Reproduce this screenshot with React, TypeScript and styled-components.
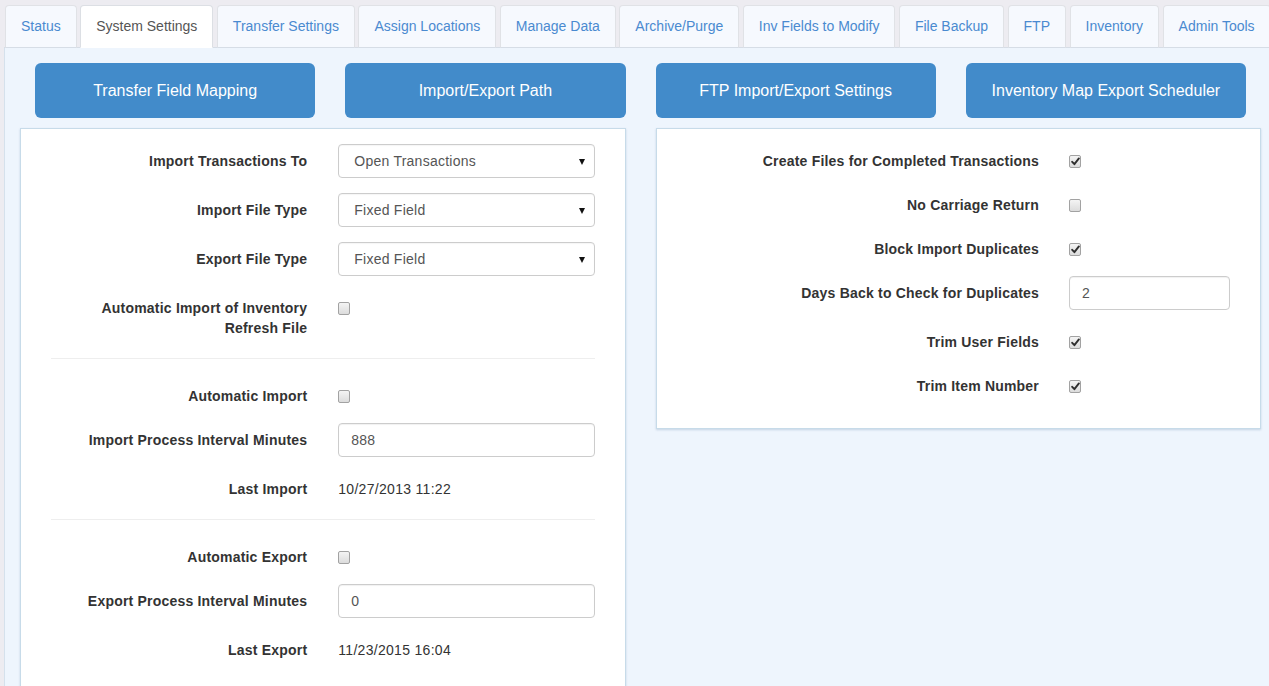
import React from 'react';
import styled, { createGlobalStyle } from 'styled-components';

const GlobalStyle = createGlobalStyle`
  html, body {
    margin: 0;
    padding: 0;
    background: #edecf1;
    overflow: hidden;
  }
  body {
    font-family: "Liberation Sans", Arial, Helvetica, sans-serif;
    font-size: 14px;
    line-height: 20px;
    color: #333;
  }
  * {
    box-sizing: border-box;
  }
`;

const tabs = [
  'Status',
  'System Settings',
  'Transfer Settings',
  'Assign Locations',
  'Manage Data',
  'Archive/Purge',
  'Inv Fields to Modify',
  'File Backup',
  'FTP',
  'Inventory',
  'Admin Tools',
];

const actions = [
  'Transfer Field Mapping',
  'Import/Export Path',
  'FTP Import/Export Settings',
  'Inventory Map Export Scheduler',
];

function Checkbox(props: { checked?: boolean }): JSX.Element {
  return (
    <CheckWrap>
      <CheckBox>
        {props.checked && (
          <svg width="9" height="9" viewBox="0 0 9 9">
            <path
              d="M1.2 4.8 L3.4 7.2 L7.9 1.4"
              fill="none"
              stroke="#2f2f2f"
              strokeWidth="1.9"
              strokeLinecap="round"
              strokeLinejoin="round"
            />
          </svg>
        )}
      </CheckBox>
    </CheckWrap>
  );
}

function Select(props: { value: string }): JSX.Element {
  return (
    <SelectWrap>
      <SelectField defaultValue={props.value}>
        <option>{props.value}</option>
      </SelectField>
      <Caret />
    </SelectWrap>
  );
}

export default function App(): JSX.Element {
  return (
    <Page>
      <GlobalStyle />
      <TabBar>
        {tabs.map((t) => (
          <Tab key={t} active={t === 'System Settings'}>
            {t}
          </Tab>
        ))}
      </TabBar>
      <Pane>
        <ButtonRow>
          {actions.map((a) => (
            <ActionButton key={a}>{a}</ActionButton>
          ))}
        </ButtonRow>
        <PanelGrid>
          <Panel>
            <FormRow>
              <Label>Import Transactions To</Label>
              <Select value="Open Transactions" />
            </FormRow>
            <FormRow>
              <Label>Import File Type</Label>
              <Select value="Fixed Field" />
            </FormRow>
            <FormRow>
              <Label>Export File Type</Label>
              <Select value="Fixed Field" />
            </FormRow>
            <FormRow>
              <Label>Automatic Import of Inventory Refresh File</Label>
              <Checkbox />
            </FormRow>
            <Divider />
            <FormRow>
              <Label>Automatic Import</Label>
              <Checkbox />
            </FormRow>
            <FormRow>
              <Label>Import Process Interval Minutes</Label>
              <TextInput defaultValue="888" />
            </FormRow>
            <FormRow>
              <Label>Last Import</Label>
              <StaticText>10/27/2013 11:22</StaticText>
            </FormRow>
            <Divider />
            <FormRow>
              <Label>Automatic Export</Label>
              <Checkbox />
            </FormRow>
            <FormRow>
              <Label>Export Process Interval Minutes</Label>
              <TextInput defaultValue="0" />
            </FormRow>
            <FormRow>
              <Label>Last Export</Label>
              <StaticText>11/23/2015 16:04</StaticText>
            </FormRow>
          </Panel>
          <Panel>
            <FormRow wide>
              <Label>Create Files for Completed Transactions</Label>
              <Checkbox checked />
            </FormRow>
            <FormRow wide>
              <Label>No Carriage Return</Label>
              <Checkbox />
            </FormRow>
            <FormRow wide>
              <Label>Block Import Duplicates</Label>
              <Checkbox checked />
            </FormRow>
            <FormRow wide>
              <Label>Days Back to Check for Duplicates</Label>
              <TextInput defaultValue="2" />
            </FormRow>
            <FormRow wide>
              <Label>Trim User Fields</Label>
              <Checkbox checked />
            </FormRow>
            <FormRow wide>
              <Label>Trim Item Number</Label>
              <Checkbox checked />
            </FormRow>
          </Panel>
        </PanelGrid>
      </Pane>
    </Page>
  );
}

const Page = styled.div`
  width: 1281px;
  padding: 5px 0 0 4px;
`;

const TabBar = styled.ul`
  display: flex;
  flex-wrap: nowrap;
  list-style: none;
  margin: 0;
  padding: 0 0 0 1px;
  border-bottom: 1px solid #d6dde6;
`;

const Tab = styled.li<{ active?: boolean }>`
  flex: none;
  margin: 0 3.5px -1px 0;
  padding: 10px 15px 11px;
  line-height: 20px;
  white-space: nowrap;
  border: 1px solid ${(p) => (p.active ? '#dcdfe4' : '#e0e2e6')};
  border-bottom-color: ${(p) => (p.active ? 'transparent' : '#d6dde6')};
  border-radius: 4px 4px 0 0;
  background: ${(p) => (p.active ? '#ffffff' : '#f6f9fe')};
  color: ${(p) => (p.active ? '#555555' : '#4a8ad0')};
`;

const Pane = styled.div`
  width: 1273px;
  background: #eef5fd;
  border: 1px solid #d5e1ec;
  border-top: none;
  padding: 15px;
  min-height: 700px;
`;

const ButtonRow = styled.div`
  display: grid;
  grid-template-columns: repeat(4, 1fr);
  column-gap: 30px;
  padding: 0 15px;
  margin-bottom: 10px;
`;

const ActionButton = styled.button`
  height: 55px;
  border: none;
  border-radius: 6px;
  background: #428bca;
  color: #ffffff;
  font-family: "Liberation Sans", Arial, sans-serif;
  font-size: 16px;
  padding: 0 10px;
`;

const PanelGrid = styled.div`
  display: grid;
  grid-template-columns: 1fr 1fr;
  column-gap: 30px;
  align-items: start;
`;

const Panel = styled.div`
  background: #ffffff;
  border: 1px solid #c7dbe9;
  box-shadow: 0 1px 2px rgba(120, 150, 180, 0.35);
  padding: 15px 30px;
`;

const FormRow = styled.div<{ wide?: boolean }>`
  display: grid;
  grid-template-columns: ${(p) => (p.wide ? '1fr 161px' : '1fr 1fr')};
  column-gap: ${(p) => (p.wide ? '30px' : '31px')};
  margin-bottom: 15px;
`;

const Label = styled.label`
  text-align: right;
  font-weight: bold;
  padding-top: 7px;
  line-height: 20px;
  letter-spacing: 0.2px;
  color: #333;
`;

const StaticText = styled.div`
  padding-top: 7px;
  line-height: 20px;
  min-height: 27px;
  letter-spacing: 0.3px;
  color: #333;
`;

const CheckWrap = styled.div`
  padding-top: 11px;
  min-height: 29px;
`;

const CheckBox = styled.span`
  display: flex;
  align-items: center;
  justify-content: center;
  width: 12px;
  height: 13px;
  border: 1px solid #a2a2a2;
  border-radius: 2px;
  background: linear-gradient(#f4f4f4, #dcdcdc);
`;

const SelectWrap = styled.div`
  position: relative;
  height: 34px;
`;

const SelectField = styled.select`
  appearance: none;
  width: 100%;
  height: 34px;
  border: 1px solid #cccccc;
  border-radius: 4px;
  background: #ffffff;
  padding: 0 15px;
  font-family: "Liberation Sans", Arial, sans-serif;
  font-size: 14px;
  letter-spacing: 0.25px;
  color: #555555;
  box-shadow: inset 0 1px 1px rgba(0, 0, 0, 0.04);
`;

const Caret = styled.span`
  position: absolute;
  right: 10px;
  top: 15px;
  width: 0;
  height: 0;
  border-left: 3.5px solid transparent;
  border-right: 3.5px solid transparent;
  border-top: 6px solid #111;
  pointer-events: none;
`;

const TextInput = styled.input`
  width: 100%;
  height: 34px;
  border: 1px solid #cccccc;
  border-radius: 4px;
  background: #ffffff;
  padding: 0 12px;
  font-family: "Liberation Sans", Arial, sans-serif;
  font-size: 14px;
  letter-spacing: 0.25px;
  color: #555555;
  box-shadow: inset 0 1px 1px rgba(0, 0, 0, 0.06);
`;

const Divider = styled.hr`
  border: none;
  border-top: 1px solid #eeeeee;
  margin: 20px 0;
`;
